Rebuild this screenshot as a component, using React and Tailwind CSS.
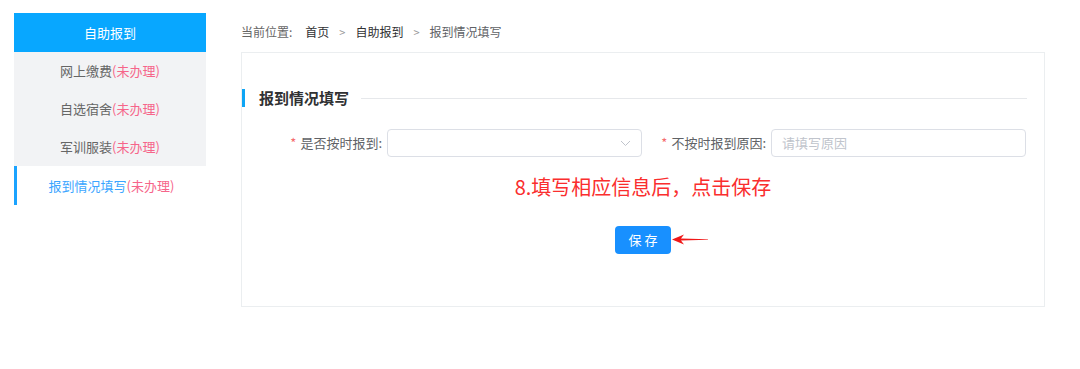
import React from 'react';

const font = { fontFamily: '"Noto Sans CJK SC", "Noto Sans", sans-serif' };

const menu = [
    { name: '网上缴费', status: '(未办理)' },
    { name: '自选宿舍', status: '(未办理)' },
    { name: '军训服装', status: '(未办理)' },
];

function Sidebar() {
    return (
        <div className="w-[192px] shrink-0 text-[13px]">
            <div className="h-[39px] bg-[#08a7ff] text-white flex items-center justify-center">自助报到</div>
            <div className="bg-[#f2f3f5]">
                {menu.map((m) => (
                    <div key={m.name} className="h-[38px] flex items-center justify-center text-[#666]">
                        {m.name}
                        <span className="text-[#f6658a]">{m.status}</span>
                    </div>
                ))}
            </div>
            <div className="h-[39px] flex items-center justify-center text-[#3aa5ff] border-l-[3px] border-[#1ba3ff]">
                报到情况填写<span className="text-[#f6658a]">(未办理)</span>
            </div>
        </div>
    );
}

export default function App() {
    return (
        <div className="w-[1080px] h-[369px] bg-white flex pt-[13px] pl-[14px]" style={font}>
            <Sidebar />
            <div className="ml-[35px] w-[804px]">
                <div className="h-[39px] flex items-center text-[12px] text-[#666] gap-[10px] pb-[1px]">
                    <span>当前位置:</span>
                    <span className="text-[#303133] ml-[3px]">首页</span>
                    <span className="text-[#999] text-[11px]">&gt;</span>
                    <span className="text-[#303133]">自助报到</span>
                    <span className="text-[#999] text-[11px]">&gt;</span>
                    <span className="text-[#606266]">报到情况填写</span>
                </div>
                <div className="h-[255px] border border-[#ebeef0] pt-[36px]">
                    <div className="flex items-center h-[18px] pr-[17px]">
                        <div className="w-[3px] h-[18px] bg-[#0ea5f5]"></div>
                        <span className="ml-[14px] text-[15px] font-bold text-[#303133]">报到情况填写</span>
                        <div className="flex-1 h-px bg-[#e6e8eb] ml-[12px]"></div>
                    </div>
                    <div className="flex mt-[22px] pl-[35px]">
                        <div className="flex items-center">
                            <div className="w-[110px] pr-[5px] text-right text-[13px] text-[#606266]">
                                <span className="text-[#f56c6c] mr-[4px]">*</span>是否按时报到:
                            </div>
                            <div className="w-[255px] h-[28px] border border-[#dcdfe6] rounded-[4px] flex items-center justify-end pr-[10px]">
                                <svg width="11" height="7" viewBox="0 0 11 7" fill="none">
                                    <path d="M1 1l4.5 4.5L10 1" stroke="#c0c4cc" strokeWidth="1" />
                                </svg>
                            </div>
                        </div>
                        <div className="flex items-center ml-[19px]">
                            <div className="w-[110px] pr-[5px] text-right text-[13px] text-[#606266]">
                                <span className="text-[#f56c6c] mr-[4px]">*</span>不按时报到原因:
                            </div>
                            <div className="w-[255px] h-[28px] border border-[#dcdfe6] rounded-[4px] flex items-center px-[10px] text-[13px] text-[#c0c4cc]">
                                请填写原因
                            </div>
                        </div>
                    </div>
                    <div className="mt-[16px] text-center text-[20px] leading-[28px] text-[#fa2e2e]">8.填写相应信息后，点击保存</div>
                    <div className="mt-[25px] flex justify-center">
                        <div className="relative">
                            <div className="w-[56px] h-[28px] rounded-[4px] bg-[#1890ff] text-white text-[13px] flex items-center justify-center tracking-[3px] pl-[3px]">
                                保存
                            </div>
                            <svg className="absolute left-[57px] top-[8px]" width="37" height="11" viewBox="0 0 37 11">
                                <polygon points="0,5.5 12,0.5 9,4.5 36,5.2 36,5.8 9,6.5 12,10.5" fill="#f01818" />
                            </svg>
                        </div>
                    </div>
                </div>
            </div>
        </div>
    );
}
